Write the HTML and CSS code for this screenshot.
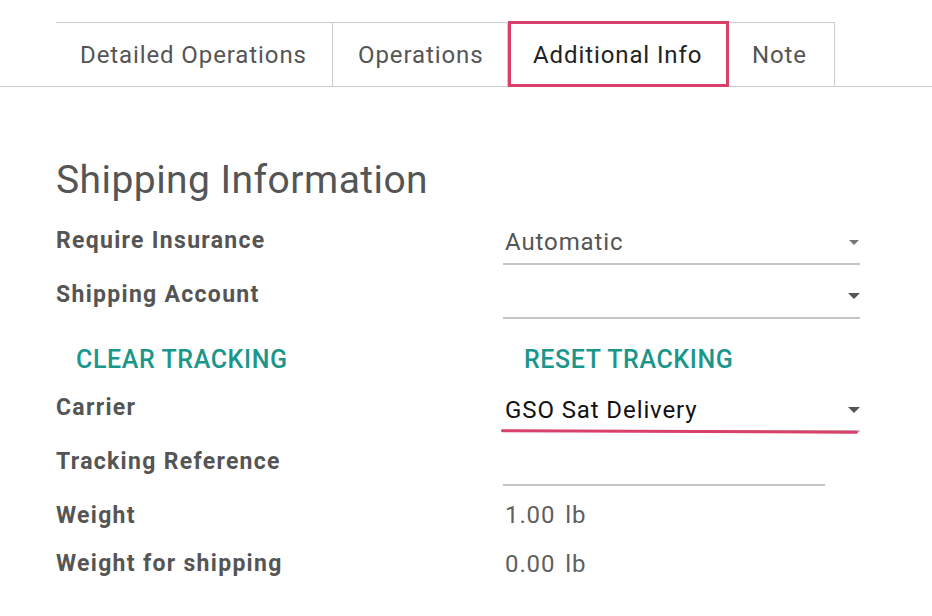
FILE: index.html
```html
<!DOCTYPE html>
<html>
<head>
<meta charset="utf-8">
<link rel="stylesheet" href="styles.css">
</head>
<body>
<div class="tabs">
  <div class="tab">Detailed Operations</div>
  <div class="tab">Operations</div>
  <div class="tab active">Additional Info</div>
  <div class="tab">Note</div>
</div>
<div class="content">
  <h1 class="title">Shipping Information</h1>
  <div class="form">
    <div class="label">Require Insurance</div>
    <div class="field"><span class="val">Automatic</span><span class="caret light"></span></div>
    <div class="label">Shipping Account</div>
    <div class="field"><span class="val"></span><span class="caret"></span></div>
    <div class="btn"><span class="btn-left">CLEAR TRACKING</span></div>
    <div class="btn"><span class="btn-right">RESET TRACKING</span></div>
    <div class="label">Carrier</div>
    <div class="field marked"><span class="val dark">GSO Sat Delivery</span><span class="caret"></span></div>
    <div class="label">Tracking Reference</div>
    <div class="field short"><span class="val"></span></div>
    <div class="label">Weight</div>
    <div class="plain">1.00 lb</div>
    <div class="label">Weight for shipping</div>
    <div class="plain last">0.00 lb</div>
  </div>
</div>
</body>
</html>
```
FILE: styles.css
```css
* { box-sizing: border-box; }
body {
  margin: 0;
  font-family: Roboto, "Noto Sans", sans-serif;
  background: #fff;
  color: #555;
}
.tabs {
  margin-top: 22px;
  display: flex;
  padding-left: 56px;
  border-bottom: 1px solid #c9ccd0;
  height: 65px;
}
.tab {
  height: 65px;
  border-top: 1px solid #c9ccd0;
  border-right: 1px solid #c9ccd0;
  font-size: 24px;
  letter-spacing: 0.9px;
  color: #555;
  display: flex;
  align-items: center;
  margin-bottom: -1px;
  white-space: nowrap;
}
.tab:nth-child(1) { width: 277px; padding-left: 24px; }
.tab:nth-child(2) { width: 175px; padding-left: 25px; }
.tab.active {
  width: 221px;
  border: 3px solid #d9406a;
  color: #222;
  margin-top: -1px;
  height: 66px;
  padding-left: 22px;
  padding-top: 2px;
}
.tab:nth-child(4) { width: 106px; padding-left: 23px; }
.content { padding-left: 56px; }
.title {
  margin: 70px 0 0 0;
  font-weight: 400;
  font-size: 39px;
  letter-spacing: 0.45px;
  color: #555;
  line-height: 46px;
  height: 54px;
}
.form {
  display: grid;
  grid-template-columns: 447px 357px;
  grid-template-rows: 54px 54px 59px 54px 54px 48px 54px;
}
.label {
  font-weight: 700;
  font-size: 23px;
  letter-spacing: 1.3px;
  color: #555;
  padding-top: 16px;
  white-space: nowrap;
}
.field {
  display: flex;
  align-items: center;
  justify-content: space-between;
  border-bottom: 2px solid #c4c4c4;
  height: 54px;
  padding-top: 10px;
  padding-left: 2px;
  font-size: 24px;
  letter-spacing: 0.9px;
  color: #555;
  position: relative;
}
.field.marked { padding-top: 12px; }
.field.short { width: 322px; }
.val.dark { color: #111; }
.caret {
  width: 0; height: 0;
  border-left: 6px solid transparent;
  border-right: 6px solid transparent;
  border-top: 6px solid #555;
}
.caret.light { border-top-color: #777; border-left-width: 5px; border-right-width: 5px; border-top-width: 5px; margin-right: 1px; }
.field.marked::after {
  content: "";
  position: absolute;
  left: -2px;
  right: 2px;
  bottom: -3px;
  height: 3px;
  background: #d9406a;
  border-radius: 2px;
  transform: rotate(0.25deg);
}
.btn {
  font-size: 25px;
  font-weight: 500;
  letter-spacing: 0.6px;
  color: #1b968b;
  padding-top: 26px;
  white-space: nowrap;
}
.btn-left { padding-left: 20px; }
.btn-right { padding-left: 21px; }
.plain {
  font-size: 24px;
  letter-spacing: 0.9px;
  word-spacing: 3px;
  color: #5f5f5f;
  padding-top: 15px;
  padding-left: 2px;
}
.plain.last { padding-top: 16px; }
```
